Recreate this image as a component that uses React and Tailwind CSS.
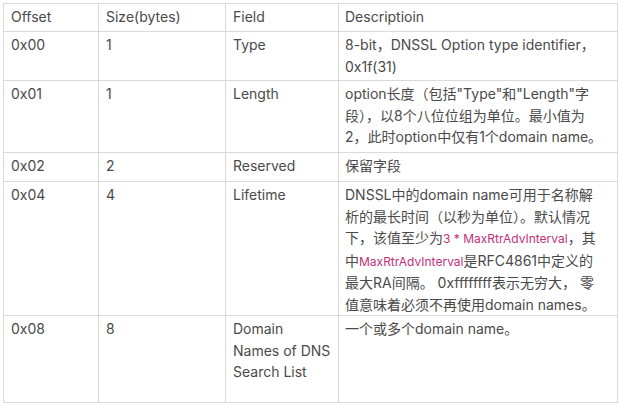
const ROWS = [
  {
    h: 'h-[49px]',
    offset: '0x00',
    size: '1',
    field: ['Type'],
    desc: [['8-bit，DNSSL Option type identifier，'], ['0x1f(31)']],
  },
  {
    h: 'h-[72px]',
    offset: '0x01',
    size: '1',
    field: ['Length'],
    desc: [
      ['option长度（包括"Type"和"Length"字'],
      ['段），以8个八位位组为单位。最小值为'],
      ['2，此时option中仅有1个domain name。'],
    ],
  },
  {
    h: 'h-[29px]',
    offset: '0x02',
    size: '2',
    field: ['Reserved'],
    desc: [['保留字段']],
  },
  {
    h: 'h-[134px]',
    offset: '0x04',
    size: '4',
    field: ['Lifetime'],
    desc: [
      ['DNSSL中的domain name可用于名称解'],
      ['析的最长时间（以秒为单位）。默认情况'],
      ['下，该值至少为', { code: '3 * MaxRtrAdvInterval' }, '，其'],
      ['中', { code: 'MaxRtrAdvInterval' }, '是RFC4861中定义的'],
      ['最大RA间隔。 0xffffffff表示无穷大， 零'],
      ['值意味着必须不再使用domain names。'],
    ],
  },
  {
    h: 'h-[87px]',
    offset: '0x08',
    size: '8',
    field: ['Domain', 'Names of DNS', 'Search List'],
    desc: [['一个或多个domain name。']],
  },
];

const cell = 'border border-[#dadada] px-[7px] pt-[2px] pb-0 align-top';

function Lines({ lines }) {
  return lines.map((parts, i) => (
    <div key={i} className="whitespace-nowrap">
      {parts.map((p, j) =>
        typeof p === 'string' ? (
          <span key={j}>{p}</span>
        ) : (
          <span key={j} className="text-[12px] text-[#c2307a]">{p.code}</span>
        )
      )}
    </div>
  ));
}

export default function App() {
  return (
    <div
      className="w-[620px] h-[405px] bg-white p-[3px] text-[14px] leading-[21.5px] text-[#4a4a4a]"
      style={{ fontFamily: 'Inter, "Noto Sans CJK SC", sans-serif' }}
    >
      <table className="border-collapse table-fixed w-[614px]">
        <colgroup>
          <col className="w-[95px]" />
          <col className="w-[127px]" />
          <col className="w-[113px]" />
          <col className="w-[279px]" />
        </colgroup>
        <thead>
          <tr className="h-[28px] text-left">
            <th className={cell + ' font-normal'}>Offset</th>
            <th className={cell + ' font-normal'}>Size(bytes)</th>
            <th className={cell + ' font-normal'}>Field</th>
            <th className={cell + ' font-normal pl-[6px]'}>Descriptioin</th>
          </tr>
        </thead>
        <tbody>
          {ROWS.map(r => (
            <tr key={r.offset} className={r.h}>
              <td className={cell}>{r.offset}</td>
              <td className={cell}>{r.size}</td>
              <td className={cell}>
                {r.field.map(f => <div key={f} className="whitespace-nowrap">{f}</div>)}
              </td>
              <td className={cell + ' pl-[6px]'}>
                <Lines lines={r.desc} />
              </td>
            </tr>
          ))}
        </tbody>
      </table>
    </div>
  );
}
